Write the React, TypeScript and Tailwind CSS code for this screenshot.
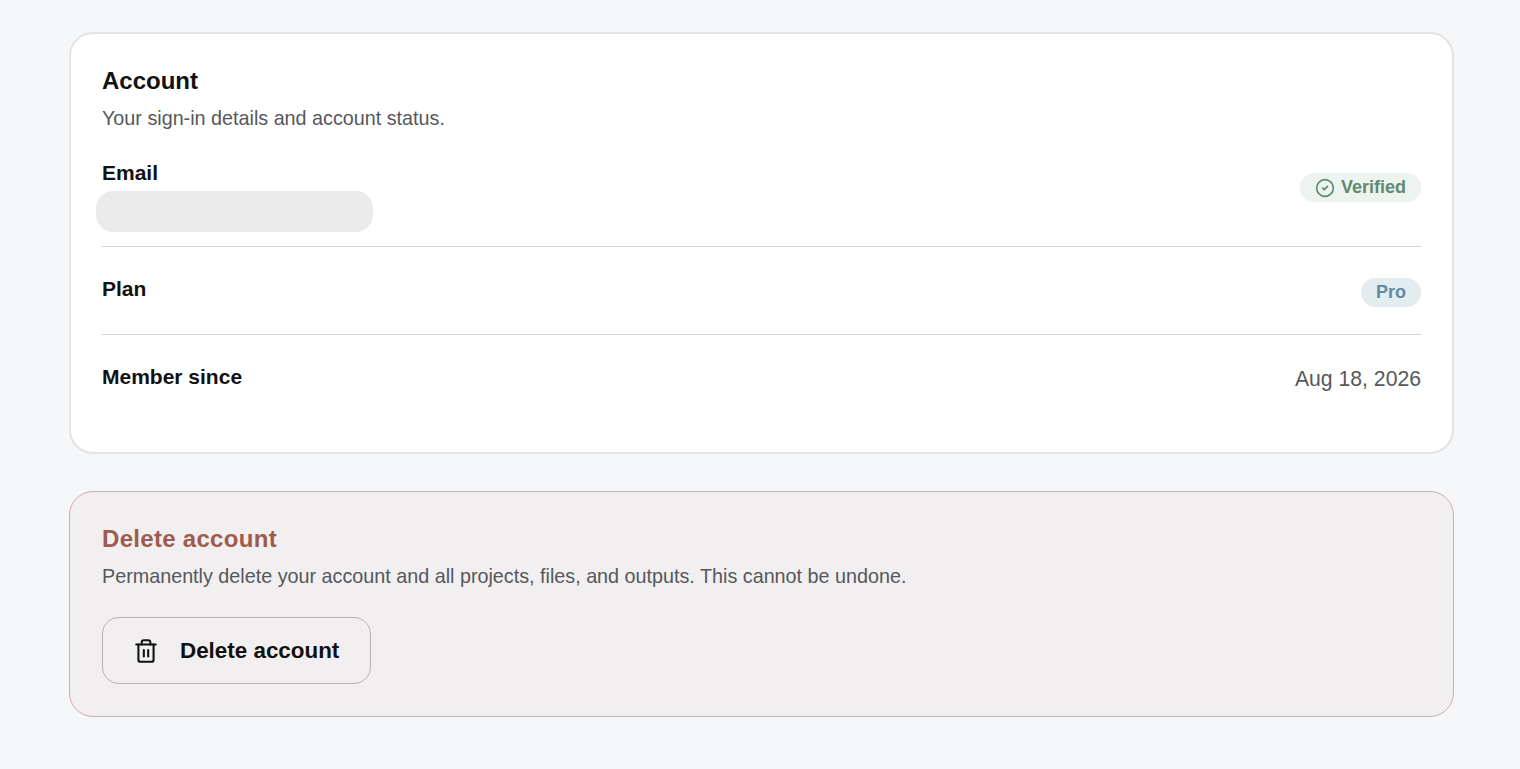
import { CircleCheck, Trash2 } from "lucide-react";

export default function App() {
  return (
    <div className="min-h-screen bg-[#f6f7f9] pt-[32px] pr-[66px] pb-[52px] pl-[69px] font-['Liberation_Sans',sans-serif]">
      <div className="flex flex-col gap-[37px]">
        {/* Account card */}
        <section className="rounded-[24px] border-2 border-[#e3e3e3] bg-white px-[31px] pt-[31px] pb-[61px]">
          <h2 className="text-[24px] leading-[32px] font-bold text-[#111111]">Account</h2>
          <p className="mt-[7px] text-[19.75px] leading-[28px] text-[#55585c]">
            Your sign-in details and account status.
          </p>

          <div className="mt-[29px] flex items-start justify-between border-b border-[#d2d2d2] pb-[14px]">
            <div>
              <div className="text-[21px] leading-[24px] font-bold text-[#111111]">Email</div>
              <div className="mt-[6px] -ml-[6px] h-[41px] w-[277px] rounded-[17px] bg-[#ebebeb]" />
            </div>
            <span className="mt-[12px] flex h-[29px] items-center gap-[6px] rounded-full bg-[#edf3ef] px-[15px] text-[18px] font-bold text-[#5f8a70]">
              <CircleCheck size={20} strokeWidth={2} />
              Verified
            </span>
          </div>

          <div className="flex items-start justify-between border-b border-[#d2d2d2] pt-[30px] pb-[27px]">
            <div className="text-[21px] leading-[24px] font-bold text-[#111111]">Plan</div>
            <span className="mt-[1px] flex h-[29px] items-center rounded-full bg-[#e3ecee] px-[15px] text-[18px] font-bold text-[#5f8ba3]">
              Pro
            </span>
          </div>

          <div className="flex items-start justify-between pt-[30px]">
            <div className="text-[21px] leading-[24px] font-bold text-[#111111]">Member since</div>
            <div className="mt-[2px] text-[21.2px] leading-[24px] text-[#55585c]">Aug 18, 2026</div>
          </div>
        </section>

        {/* Danger zone */}
        <section className="rounded-[24px] border border-[#cfb0aa] bg-[#f1eff0] px-[32px] pt-[31px] pb-[32px]">
          <h2 className="text-[24px] leading-[32px] font-bold tracking-[0.3px] text-[#a05a4e]">Delete account</h2>
          <p className="mt-[7px] text-[19.75px] leading-[28px] text-[#55585c]">
            Permanently delete your account and all projects, files, and outputs. This cannot be undone.
          </p>
          <button className="mt-[27px] flex h-[67px] w-[269px] items-center gap-[21px] rounded-[17px] border border-[#bdb2b0] pl-[30px] text-[22.4px] font-bold text-[#111111]">
            <Trash2 size={26} strokeWidth={1.9} />
            Delete account
          </button>
        </section>
      </div>
    </div>
  );
}
